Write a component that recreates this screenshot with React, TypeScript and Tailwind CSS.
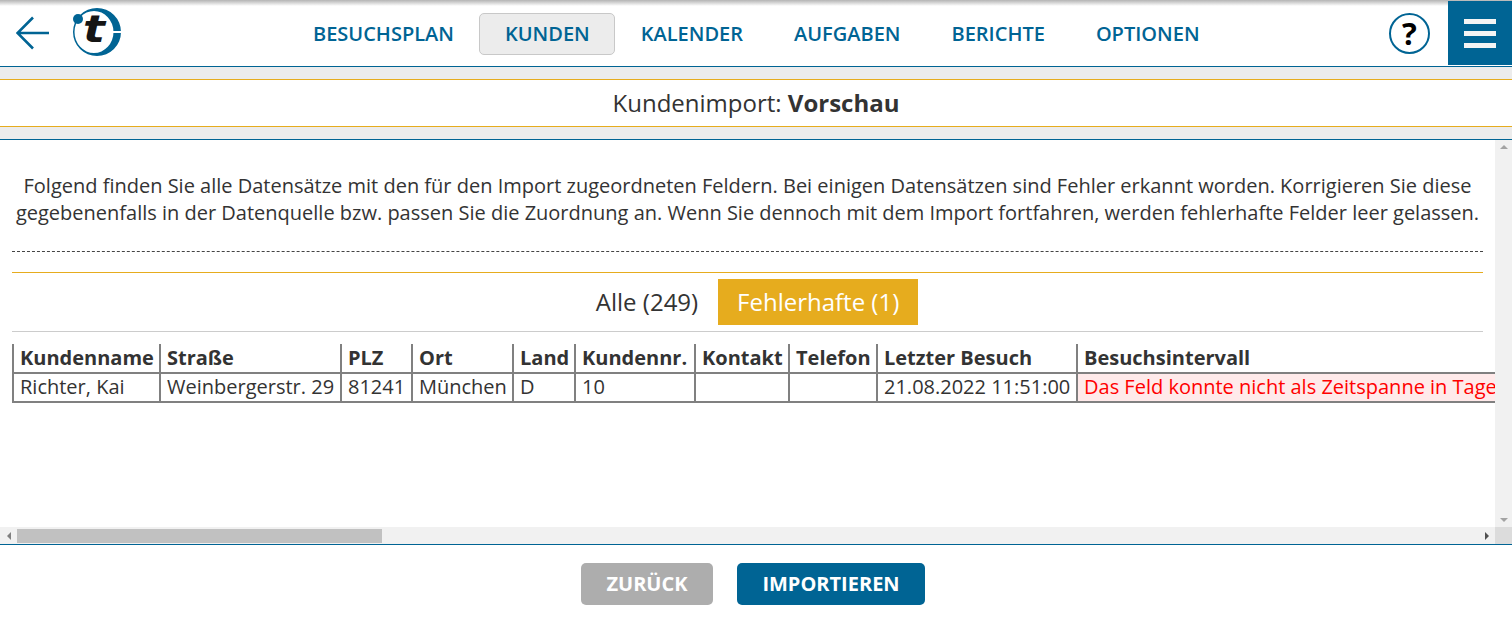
const NAV = ["BESUCHSPLAN", "KUNDEN", "KALENDER", "AUFGABEN", "BERICHTE", "OPTIONEN"];
const HEAD = ["Kundenname", "Straße", "PLZ", "Ort", "Land", "Kundennr.", "Kontakt", "Telefon", "Letzter Besuch", "Besuchsintervall"];
const ROW = ["Richter, Kai", "Weinbergerstr. 29", "81241", "München", "D", "10", "", "", "21.08.2022 11:51:00"];

function Logo() {
  return (
    <svg width="50" height="50" viewBox="0 0 50 50" className="block">
      <path fillRule="evenodd" d="M25 1a24 24 0 1 0 0 48a24 24 0 1 0 0-48zM22 4a19.500 21 0 1 1 0 42a19.500 21 0 1 1 0-42z" fill="#006494" />
      <rect x="37" y="24" width="13" height="2" fill="white" />
      <circle cx="6" cy="12" r="5" fill="#006494" />
      <text x="11" y="35" textLength="22" lengthAdjust="spacingAndGlyphs" fontFamily="'DejaVu Sans', sans-serif" fontWeight="700" fontStyle="italic" fontSize="37" fill="#151515">t</text>
    </svg>
  );
}

export default function App() {
  return (
    <div className="h-[621px] w-[1512px] overflow-hidden bg-white font-['Open_Sans',sans-serif] text-[#333333] flex flex-col">
      <header className="relative h-[67px] shrink-0 border-b border-[#006494] flex">
        <div className="absolute inset-x-0 top-0 h-[6px] bg-gradient-to-b from-[#b4b4b4] to-white" />
        <div className="w-[287.500px] shrink-0 flex items-center pl-[16px] pb-[1px]">
          <svg width="36" height="36" viewBox="0 0 36 36" fill="none" stroke="#006494" strokeWidth="2.600" className="mt-[3px]">
            <path d="M33 17H2M17 1.500 1.500 17 17 32.500" />
          </svg>
          <div className="ml-[20px] mt-[-1px] relative z-10"><Logo /></div>
        </div>
        <nav className="flex items-center pt-[1px]">
          {NAV.map((n) => (
            <div
              key={n}
              className={
                n === "KUNDEN"
                  ? "h-[42px] px-[24.500px] rounded-[5px] border border-[#c8c8c8] bg-[#ececec] flex items-center text-[20px] font-semibold leading-none text-[#006494]"
                  : "px-[25.500px] text-[20px] font-semibold leading-none text-[#006494]"
              }
            >
              {n}
            </div>
          ))}
        </nav>
        <div className="ml-auto mr-[18px] self-center h-[41px] w-[41px] rounded-full border-2 border-[#006494] flex items-center justify-center text-[31px] font-bold leading-none text-black">
          ?
        </div>
        <div className="relative mt-[1px] h-[64px] w-[64px] bg-[#006494] pt-[1px] flex flex-col items-center justify-center gap-[7px]">
          <div className="h-[5px] w-[32px] bg-[#f4f4f4]" />
          <div className="h-[5px] w-[32px] bg-[#f4f4f4]" />
          <div className="h-[5px] w-[32px] bg-[#f4f4f4]" />
        </div>
      </header>

      <div className="h-[12px] shrink-0 bg-[#ececec] border-b border-[#e6ac1e] box-content" />
      <div className="h-[47px] shrink-0 border-b border-[#e6ac1e] flex items-center justify-center text-[24px] leading-none">
        <span>Kundenimport:&nbsp;<b className="font-bold">Vorschau</b></span>
      </div>
      <div className="h-[13px] shrink-0 bg-[#ececec] border-b border-[#006494]" />

      <main className="flex-1 min-h-0 flex flex-col">
        <div className="flex-1 min-h-0 flex">
          <div className="flex-1 min-w-0 overflow-hidden px-[12px]">
            <p className="mt-[32px] w-[1471px] text-center text-[20px] leading-[27px] text-[#333333]">
              Folgend finden Sie alle Datensätze mit den für den Import zugeordneten Feldern. Bei einigen Datensätzen sind Fehler erkannt worden. Korrigieren Sie diese gegebenenfalls in der Datenquelle bzw. passen Sie die Zuordnung an. Wenn Sie dennoch mit dem Import fortfahren, werden fehlerhafte Felder leer gelassen.
            </p>
            <div className="mt-[25px] w-[1471px] border-t border-dashed border-[#444444]" />
            <div className="mt-[20px] w-[1471px] border-t border-[#e6ac1e]" />
            <div className="mt-[6px] w-[1471px] h-[46px] pl-[19px] flex items-center justify-center text-[24px] leading-none">
              <span className="mr-[20px]">Alle (249)</span>
              <span className="h-[46px] w-[200px] bg-[#e6ac1e] text-white flex items-center justify-center">Fehlerhafte (1)</span>
            </div>
            <div className="mt-[6px] w-[1471px] border-t border-[#cccccc]" />
            <table className="mt-[12px] table-fixed border-collapse text-[20px] w-[1720px]">
              <colgroup>
                {[147, 181, 71, 101, 62, 120, 94, 88, 200, 656].map((w, i) => (
                  <col key={i} style={{ width: w }} />
                ))}
              </colgroup>
              <thead>
                <tr>
                  {HEAD.map((h) => (
                    <th key={h} className="h-[29px] px-[6px] py-0 text-left font-bold leading-none whitespace-nowrap border-l-2 border-[#808080] border-b-2">
                      {h}
                    </th>
                  ))}
                </tr>
              </thead>
              <tbody>
                <tr>
                  {ROW.map((c, i) => (
                    <td key={i} className="h-[29px] px-[6px] pt-0 pb-[2px] font-normal leading-none whitespace-nowrap border-l-2 border-b-2 border-[#808080]">
                      {c}
                    </td>
                  ))}
                  <td className="h-[29px] px-[6px] pt-0 pb-[2px] leading-none whitespace-nowrap border-l-2 border-b-2 border-[#808080] bg-[#ffeaea] text-[#ff0000]">
                    Das Feld konnte nicht als Zeitspanne in Tage umgewandelt werden.
                  </td>
                </tr>
              </tbody>
            </table>
          </div>
          <div className="w-[17px] shrink-0 bg-[#f1f1f1] flex flex-col items-center justify-between py-[5px]">
            <div className="h-0 w-0 border-x-[4px] border-x-transparent border-b-[4px] border-b-[#a3a3a3]" />
            <div className="h-0 w-0 border-x-[4px] border-x-transparent border-t-[4px] border-t-[#a3a3a3]" />
          </div>
        </div>
        <div className="h-[17px] shrink-0 bg-[#f1f1f1] border-b border-[#006494] box-content flex items-center">
          <div className="w-[17px] flex justify-center">
            <div className="h-0 w-0 border-y-[4px] border-y-transparent border-r-[4px] border-r-[#808080]" />
          </div>
          <div className="h-[14px] w-[365px] bg-[#c1c1c1]" />
          <div className="ml-auto mr-[6px] h-0 w-0 border-y-[4px] border-y-transparent border-l-[4px] border-l-[#505050]" />
          <div className="w-[17px] h-full bg-[#dcdcdc]" />
        </div>
      </main>

      <footer className="h-[76px] shrink-0 flex items-center justify-center gap-[24px] pr-[6px] pt-[1px]">
        <div className="h-[42px] w-[132px] rounded-[5px] bg-[#adadad] text-white text-[20px] font-bold flex items-center justify-center leading-none">ZURÜCK</div>
        <div className="h-[42px] w-[188px] rounded-[5px] bg-[#006494] text-white text-[20px] font-bold flex items-center justify-center leading-none">IMPORTIEREN</div>
      </footer>
    </div>
  );
}
